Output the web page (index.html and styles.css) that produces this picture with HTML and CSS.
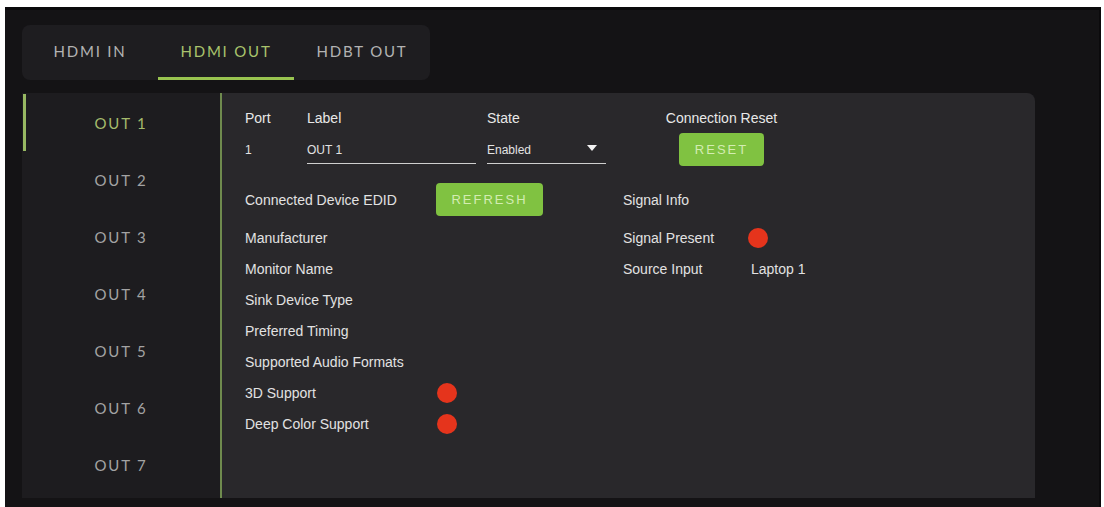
FILE: index.html
```html
<!DOCTYPE html>
<html lang="en">
    <head>
        <meta charset="UTF-8">
        <meta name="viewport" content="width=device-width, initial-scale=1.0">
        <title>Outputs</title>
        <link rel="stylesheet" href="styles.css">
    </head>
    <body>
        <div class="screen">
            <div class="tabs">
                <div class="tab">HDMI IN</div>
                <div class="tab active">HDMI OUT</div>
                <div class="tab">HDBT OUT</div>
            </div>

            <div class="main">
                <div class="sidebar">
                    <div class="side-item active">OUT 1</div>
                    <div class="side-item">OUT 2</div>
                    <div class="side-item">OUT 3</div>
                    <div class="side-item">OUT 4</div>
                    <div class="side-item">OUT 5</div>
                    <div class="side-item">OUT 6</div>
                    <div class="side-item">OUT 7</div>
                </div>

                <div class="panel">
                    <div class="fields">
                        <div class="head">Port</div>
                        <div class="head">Label</div>
                        <div class="head">State</div>
                        <div class="head center">Connection Reset</div>

                        <div class="value">1</div>
                        <div class="value field label-field">OUT 1</div>
                        <div class="value field state-field">
                            <span>Enabled</span>
                            <svg class="caret" width="10" height="6" viewBox="0 0 10 6"><path d="M0 0 H10 L5 6 Z" fill="#f2f2f2"/></svg>
                        </div>
                        <div class="center"><button class="btn reset">RESET</button></div>
                    </div>

                    <div class="info">
                        <div class="row first">
                            <div class="name">Connected Device EDID</div>
                            <div class="val"><button class="btn refresh">REFRESH</button></div>
                            <div class="name2">Signal Info</div>
                            <div class="val2"></div>
                        </div>
                        <div class="row">
                            <div class="name">Manufacturer</div>
                            <div class="val"></div>
                            <div class="name2">Signal Present</div>
                            <div class="val2"><span class="dot"></span></div>
                        </div>
                        <div class="row">
                            <div class="name">Monitor Name</div>
                            <div class="val"></div>
                            <div class="name2">Source Input</div>
                            <div class="val2 text">Laptop 1</div>
                        </div>
                        <div class="row">
                            <div class="name">Sink Device Type</div>
                        </div>
                        <div class="row">
                            <div class="name">Preferred Timing</div>
                        </div>
                        <div class="row">
                            <div class="name">Supported Audio Formats</div>
                        </div>
                        <div class="row">
                            <div class="name">3D Support</div>
                            <div class="val"><span class="dot"></span></div>
                        </div>
                        <div class="row">
                            <div class="name">Deep Color Support</div>
                            <div class="val"><span class="dot"></span></div>
                        </div>
                    </div>
                </div>
            </div>
        </div>
    </body>
</html>
```

FILE: styles.css
```css
body {
    margin: 0;
    background-color: #ffffff;
    font-family: "Liberation Sans", Arial, sans-serif;
}
.screen {
    margin: 7px 0 0 5px;
    width: 1096px;
    height: 500px;
    box-sizing: border-box;
    padding: 18px 64px 9px 17px;
    background-color: #141315;
    border-top: 3px solid #0b0a0c;
    border-right: 2px solid #0b0a0c;
}
.tabs {
    display: flex;
    width: 408px;
    height: 55px;
    margin-top: -3px;
    background-color: #1e1d20;
    border-radius: 8px;
}
.tab {
    width: 136px;
    display: flex;
    align-items: center;
    justify-content: center;
    box-sizing: border-box;
    border-bottom: 3px solid transparent;
    font-family: Lato, "Liberation Sans", sans-serif;
    font-size: 15px;
    letter-spacing: 1.8px;
    color: #b3b3b3;
}
.tab.active {
    color: #a9c36c;
    border-bottom-color: #99c450;
}
.main {
    display: flex;
    margin-top: 13px;
    height: 405px;
}
.sidebar {
    width: 198px;
    padding-top: 1px;
    background-color: #1d1c1f;
}
.side-item {
    height: 57px;
    display: flex;
    align-items: center;
    justify-content: center;
    font-family: Lato, "Liberation Sans", sans-serif;
    font-size: 15px;
    letter-spacing: 1.8px;
    color: #a3a3a3;
}
.side-item.active {
    color: #a5bb6c;
    box-shadow: inset 1px 0 0 #1d1c1f, inset 4px 0 0 #97b862;
}
.panel {
    flex: 1;
    padding: 17px 0 0 23px;
    background-color: #29282b;
    border-left: 2px solid #6f8b4e;
    border-top-right-radius: 8px;
    color: #e2e2e2;
}
.fields {
    display: grid;
    grid-template-columns: 62px 180px 177px 115px;
    align-items: start;
}
.head {
    font-size: 14px;
    line-height: 16px;
    color: #e8e8e8;
}
.center {
    text-align: center;
}
.value {
    margin-top: 14px;
    font-size: 12px;
    line-height: 20px;
    padding-bottom: 3px;
}
.field {
    border-bottom: 1px solid #cfcfcf;
}
.label-field {
    width: 169px;
}
.state-field {
    width: 119px;
    display: flex;
    align-items: center;
    justify-content: space-between;
    padding-right: 9px;
    box-sizing: border-box;
}
.caret {
    margin-top: -4px;
}
.btn {
    border: none;
    border-radius: 4px;
    background-color: #80c241;
    color: #d3ecb2;
    font-family: "Liberation Sans", Arial, sans-serif;
    font-size: 13px;
    letter-spacing: 2px;
    padding: 0;
    height: 33px;
}
.reset {
    width: 85px;
    margin-top: 7px;
}
.refresh {
    width: 107px;
}
.info {
    margin-top: 17px;
}
.row {
    display: flex;
    align-items: center;
    height: 31px;
    font-size: 14px;
}
.row.first {
    height: 33px;
    margin-bottom: 6px;
}
.name {
    width: 191px;
}
.val {
    width: 187px;
    display: flex;
    align-items: center;
}
.name2 {
    width: 124px;
}
.val2 {
    display: flex;
    align-items: center;
}
.val2.text {
    padding-left: 4px;
}
.dot {
    width: 20px;
    height: 20px;
    margin-left: 1px;
    border-radius: 50%;
    background-color: #e5341c;
}
```
